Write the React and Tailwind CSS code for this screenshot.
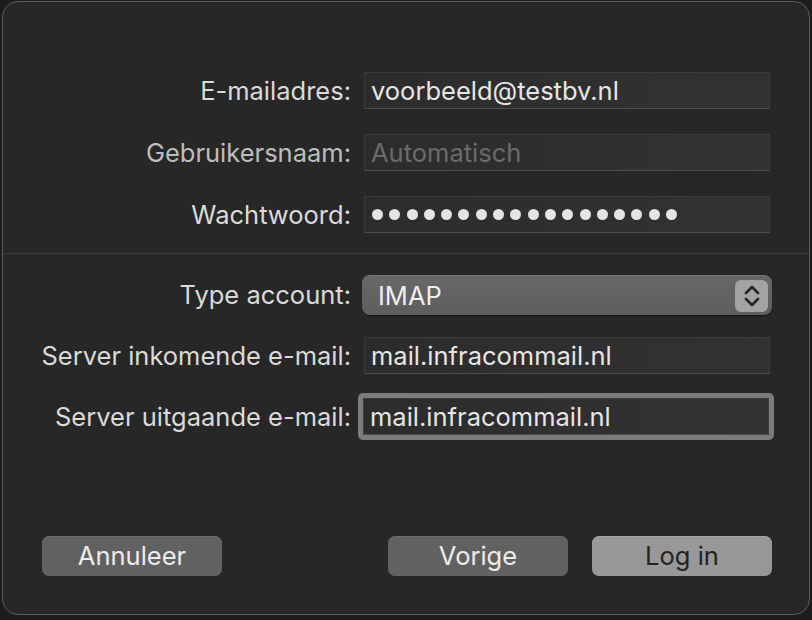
import React from 'react'

function Field({ value, placeholder, focused }) {
  const inner = (
    <div className="h-[37px] w-[406px] border border-[#3b3b3b] border-b-[#4d4d4d] bg-gradient-to-r from-[#2c2c2c] to-[#323232] flex items-center px-[6px]">
      {value ? (
        <span className="text-[25.5px] text-[#e6e6e6] leading-none">{value}</span>
      ) : (
        <span className="text-[25.5px] text-[#6b6b6b] leading-none">{placeholder}</span>
      )}
    </div>
  )
  if (!focused) return inner
  return (
    <div className="-m-[6px] p-[5px] rounded-[5px] bg-[#7b7b7b] w-fit">
      {inner}
    </div>
  )
}

function Label({ children }) {
  return <div className="text-right text-[25.5px] text-[#dadada] leading-none">{children}</div>
}

export default function App() {
  const dots = Array.from({ length: 18 })

  return (
    <div className="w-[812px] h-[620px] bg-[#1d1d1d] pt-[1px] pl-[2px]" style={{ fontFamily: 'Inter, "Noto Sans", sans-serif' }}>
      <div className="w-[808px] h-[614px] rounded-[16px] border border-[#5b5b5b] bg-[#272727] flex flex-col">
        {/* top fields */}
        <div className="pt-[70px] grid grid-cols-[348px_406px] gap-x-[13px] gap-y-[25px] items-center">
          <Label>E-mailadres:</Label>
          <Field value="voorbeeld@testbv.nl" />
          <Label><span className="text-[#bdbdbd]">Gebruikersnaam:</span></Label>
          <Field placeholder="Automatisch" />
          <Label>Wachtwoord:</Label>
          <div className="h-[37px] w-[406px] border border-[#3b3b3b] border-b-[#4d4d4d] bg-gradient-to-r from-[#2c2c2c] to-[#323232] flex items-center gap-[6.3px] px-[7px]">
            {dots.map((_, i) => (
              <span key={i} className="w-[11px] h-[11px] rounded-full bg-[#e4e4e4]" />
            ))}
          </div>
        </div>

        <div className="mt-[20px] h-px bg-[#3d3d3d]" />

        {/* server fields */}
        <div className="pt-[21px] grid grid-cols-[348px_406px] gap-x-[13px] items-center">
          <Label>Type account:</Label>
          <div className="-ml-[2px] h-[40px] w-[410px] rounded-[8px] bg-gradient-to-b from-[#686868] to-[#5d5d5d] border-t border-[#737373] flex items-center pl-[16px] pr-[4px] shadow-[0_1px_1px_rgba(0,0,0,0.4)]">
            <span className="text-[25.5px] text-[#eeeeee] flex-1 leading-none">IMAP</span>
            <div className="w-[33px] h-[32px] rounded-[6px] bg-[#a3a3a3] flex items-center justify-center">
              <svg width="20" height="28" viewBox="0 0 20 28" fill="none" stroke="#262626" strokeWidth="2.6" strokeLinecap="round" strokeLinejoin="round">
                <path d="M4 11 10 5 16 11" />
                <path d="M4 17 10 23 16 17" />
              </svg>
            </div>
          </div>
          <div className="h-[22px] col-span-2" />
          <Label>Server inkomende e-mail:</Label>
          <Field value="mail.infracommail.nl" />
          <div className="h-[25px] col-span-2" />
          <Label>Server uitgaande e-mail:</Label>
          <Field value="mail.infracommail.nl" focused />
        </div>

        {/* buttons */}
        <div className="mt-auto mb-[38px] flex items-center pl-[39px] pr-[37px]">
          <button className="w-[180px] h-[40px] rounded-[7px] bg-[#616161] border-t border-[#6e6e6e] text-[25.5px] text-[#ececec] leading-none pb-[2px]">Annuleer</button>
          <div className="flex-1" />
          <button className="w-[180px] h-[40px] rounded-[7px] bg-[#616161] border-t border-[#6e6e6e] text-[25.5px] text-[#ececec] leading-none pb-[2px]">Vorige</button>
          <button className="ml-[24px] w-[180px] h-[40px] rounded-[7px] bg-[#989898] border-t border-[#a4a4a4] text-[25.5px] text-[#232323] leading-none pb-[2px]">Log in</button>
        </div>
      </div>
    </div>
  )
}
